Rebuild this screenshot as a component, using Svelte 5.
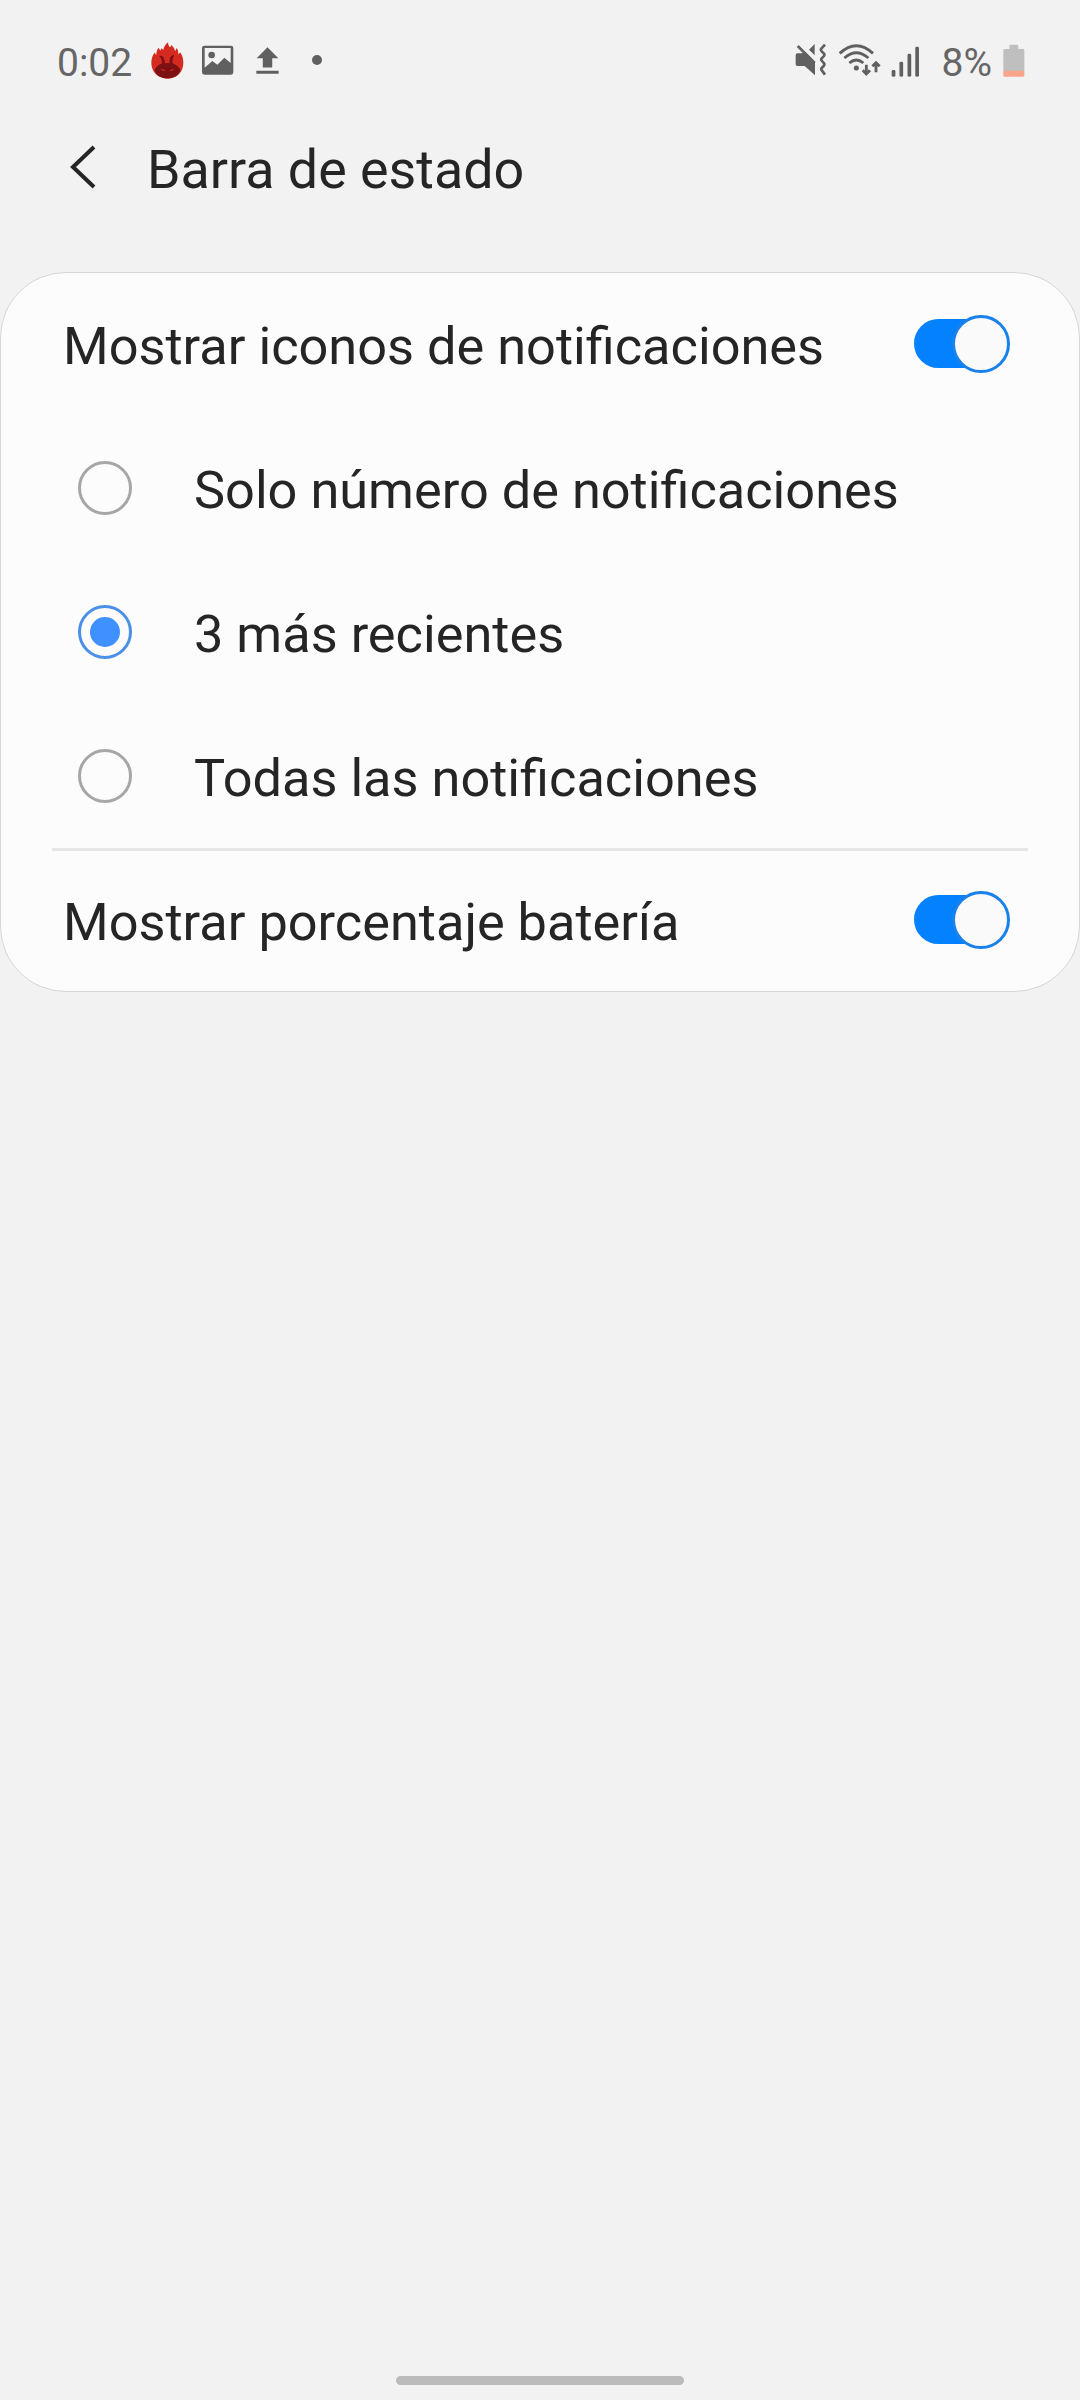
<script lang="ts">
	type Mode = { id: string; label: string };

	const modes: Mode[] = [
		{ id: 'count', label: 'Solo número de notificaciones' },
		{ id: 'recent', label: '3 más recientes' },
		{ id: 'all', label: 'Todas las notificaciones' }
	];

	let selected = $state('recent');
	let showIcons = $state(true);
	let showPercent = $state(true);
</script>

{#snippet toggle(on: boolean, label: string, flip: () => void)}
	<button class="switch" class:on role="switch" aria-checked={on} aria-label={label} onclick={flip}>
		<span class="thumb"></span>
	</button>
{/snippet}

<div class="screen">
	<div class="status">
		<span class="time">0:02</span>
		<svg class="flame" viewBox="332 36 100 112">
			<path
				fill="#d42a1f"
				d="M382 147C352 147 333 126 333 99C333 87 337 76 343 68L348 76C348 65 351 58 355 53L360 62L364 55L369 60C371 51 376 43 384 37C383 45 386 49 391 52L393 45C400 50 404 57 405 64L410 54C414 60 415 67 415 73L421 68C427 77 430 88 430 99C430 126 412 147 382 147Z"
			/>
			<path
				fill="#7c1012"
				d="M343 121C346 112 355 104 365 101C366 91 364 84 357 80C364 74 373 81 374 100Q382 99 388 100C388 83 394 74 403 77C398 82 396 91 398 101C409 104 418 112 421 121C416 138 402 146 382 146C362 146 348 138 343 121Z"
			/>
			<path fill="#d42a1f" d="M361 116L376 122Q366 127 361 116ZM403 116L388 122Q398 127 403 116Z" />
		</svg>
		<svg class="picture" viewBox="34 46 96 90">
			<path
				fill="#606060"
				fill-rule="evenodd"
				d="M41 48H121Q128 48 128 55V128Q128 135 121 135H41Q34 135 34 128V55Q34 48 41 48ZM42 55V114L65 94L80 105L101 84L120 100V55Z"
			/>
			<circle cx="63" cy="76" r="10" fill="#606060" />
		</svg>
		<svg class="upload" viewBox="197 50 68 80">
			<path fill="#606060" d="M231 51L263 83H245V111H217V83H199ZM198 120H264V129H198Z" />
		</svg>
		<span class="more"></span>

		<div class="system">
			<svg class="mute" viewBox="45 40 96 102" fill="none" stroke="#606060">
				<path
					fill="#606060"
					stroke="none"
					d="M47 76Q47 71 52 71H67L74 65L105 96V137L74 109H52Q47 109 47 104ZM104 43V77L87 60Z"
				/>
				<path stroke-width="8" d="M53 49L104 100" />
				<path
					stroke-width="8"
					stroke-linejoin="round"
					d="M135 45L124 57Q121 61 125 65L132 72Q135 76 131 80L125 86Q122 90 126 94L132 101Q135 105 131 109L125 115Q122 119 126 123L135 135"
				/>
			</svg>
			<svg class="wifi" viewBox="174 40 129 102" fill="none" stroke="#606060" stroke-width="8.5">
				<path d="M179 71Q229 25 279 71M193 85Q229 54 265 85M208 100Q229 82 250 100" />
				<circle cx="229" cy="115" r="7.5" fill="#606060" stroke="none" />
				<path d="M259 105V131M248 122L259 133L270 122M288 128V100M277 110L288 99L299 110" />
			</svg>
			<svg class="signal" viewBox="334 48 86 92" fill="#606060">
				<rect x="336" y="119" width="11" height="20" rx="4" />
				<rect x="359" y="95" width="11" height="44" rx="4" />
				<rect x="383" y="71" width="11" height="68" rx="4" />
				<rect x="406" y="50" width="11" height="89" rx="4" />
			</svg>
			<span class="percent">8%</span>
			<svg class="battery" viewBox="248 42 66 99">
				<path fill="#bfbfbf" d="M267 47Q267 44 270 44H291Q294 44 294 47V57H308Q312 57 312 61V123H249V61Q249 57 253 57H267Z" />
				<path fill="#f9a58c" d="M249 122H312V136Q312 140 308 140H253Q249 140 249 136Z" />
			</svg>
		</div>
	</div>

	<header>
		<button class="back" aria-label="Atrás">
			<svg viewBox="0 0 26 44" fill="none" stroke="#252525" stroke-width="4">
				<path d="M24 2L3 22L24 42" />
			</svg>
		</button>
		<h1>Barra de estado</h1>
	</header>

	<main>
		<div class="row">
			<span class="label">Mostrar iconos de notificaciones</span>
			{@render toggle(showIcons, 'Mostrar iconos', () => (showIcons = !showIcons))}
		</div>

		{#each modes as mode (mode.id)}
			<button
				class="row option"
				role="radio"
				aria-checked={selected === mode.id}
				onclick={() => (selected = mode.id)}
			>
				<span class="radio" class:checked={selected === mode.id}></span>
				<span class="label">{mode.label}</span>
			</button>
		{/each}

		<hr />

		<div class="row">
			<span class="label">Mostrar porcentaje batería</span>
			{@render toggle(showPercent, 'Mostrar porcentaje', () => (showPercent = !showPercent))}
		</div>
	</main>

	<div class="home"></div>
</div>

<style>
	:global(body) {
		background: #f2f2f2;
	}

	.screen {
		display: flex;
		flex-direction: column;
		box-sizing: border-box;
		width: 1080px;
		height: 2400px;
		padding-bottom: 15px;
		background: #f2f2f2;
		color: #252525;
		font-family: Roboto, sans-serif;
	}

	button {
		padding: 0;
		border: none;
		background: none;
		color: inherit;
		font: inherit;
		cursor: pointer;
	}

	svg {
		display: block;
		flex: none;
	}

	/* status bar */
	.status {
		display: flex;
		align-items: center;
		height: 120px;
		padding: 0 55px 0 57px;
		color: #666;
		font-size: 39px;
		line-height: 46px;
	}

	.time,
	.percent {
		padding-top: 5px;
	}

	.flame {
		width: 33px;
		height: 37px;
		margin-left: 19px;
	}

	.picture {
		width: 32px;
		height: 30px;
		margin-left: 18px;
	}

	.upload {
		width: 23px;
		height: 27px;
		margin-left: 22px;
	}

	.more {
		width: 10px;
		height: 10px;
		margin-left: 33px;
		border-radius: 50%;
		background: #606060;
	}

	.system {
		display: flex;
		align-items: center;
		margin-left: auto;
	}

	.mute {
		width: 32px;
		height: 34px;
	}

	.wifi {
		width: 43px;
		height: 34px;
		margin-left: 11px;
	}

	.signal {
		width: 29px;
		height: 31px;
		margin: 2px 0 0 10px;
	}

	.percent {
		margin-left: 22px;
	}

	.battery {
		width: 22px;
		height: 33px;
		margin-left: 11px;
	}

	/* title */
	header {
		display: flex;
		align-items: center;
		height: 94px;
		margin-bottom: 58px;
		padding-left: 70px;
	}

	.back svg {
		width: 26px;
		height: 44px;
	}

	h1 {
		margin: 0 0 0 51px;
		padding-top: 5px;
		font-size: 53.8px;
		font-weight: 400;
		line-height: 63px;
	}

	/* settings card */
	main {
		display: flex;
		flex-direction: column;
		box-sizing: border-box;
		height: 720px;
		border: 1px solid #d6d6d6;
		border-radius: 66px;
		background: #fcfcfc;
	}

	.row {
		display: flex;
		align-items: center;
		justify-content: space-between;
		flex: 0 0 144px;
		box-sizing: border-box;
		padding: 0 69px 2px 62px;
		font-size: 52.3px;
		line-height: 62px;
		text-align: left;
	}

	.row.option {
		justify-content: flex-start;
		gap: 62px;
		padding-left: 77px;
	}

	.label {
		padding-top: 4px;
		white-space: nowrap;
	}

	.radio {
		display: flex;
		align-items: center;
		justify-content: center;
		box-sizing: border-box;
		width: 54px;
		height: 54px;
		border: 3px solid #a6a6a6;
		border-radius: 50%;
	}

	.radio.checked {
		border-color: #4a8fe8;
	}

	.radio.checked::after {
		content: '';
		width: 30px;
		height: 30px;
		border-radius: 50%;
		background: #3e91ff;
	}

	hr {
		flex: none;
		height: 3px;
		margin: -1px 51px -2px;
		border: none;
		background: #e6e6e6;
	}

	.switch {
		display: flex;
		align-items: center;
		width: 96px;
		height: 58px;
		background: linear-gradient(#c4c4c4, #c4c4c4) center / 100% 49px no-repeat;
		border-radius: 29px;
	}

	.thumb {
		box-sizing: border-box;
		width: 58px;
		height: 58px;
		border: 3px solid #c4c4c4;
		border-radius: 50%;
		background: #fafafa;
	}

	.switch.on {
		justify-content: flex-end;
		background: none;
	}

	.switch.on::before {
		content: '';
		width: 67px;
		height: 49px;
		margin: 0 -29px 1px 0;
		border-radius: 24.5px 0 0 24.5px;
		background: #0381fe;
	}

	.switch.on .thumb {
		border-color: #1a80ec;
	}

	/* gesture hint */
	.home {
		width: 288px;
		height: 9px;
		margin: auto auto 0;
		border-radius: 5px;
		background: #bbb;
	}
</style>
